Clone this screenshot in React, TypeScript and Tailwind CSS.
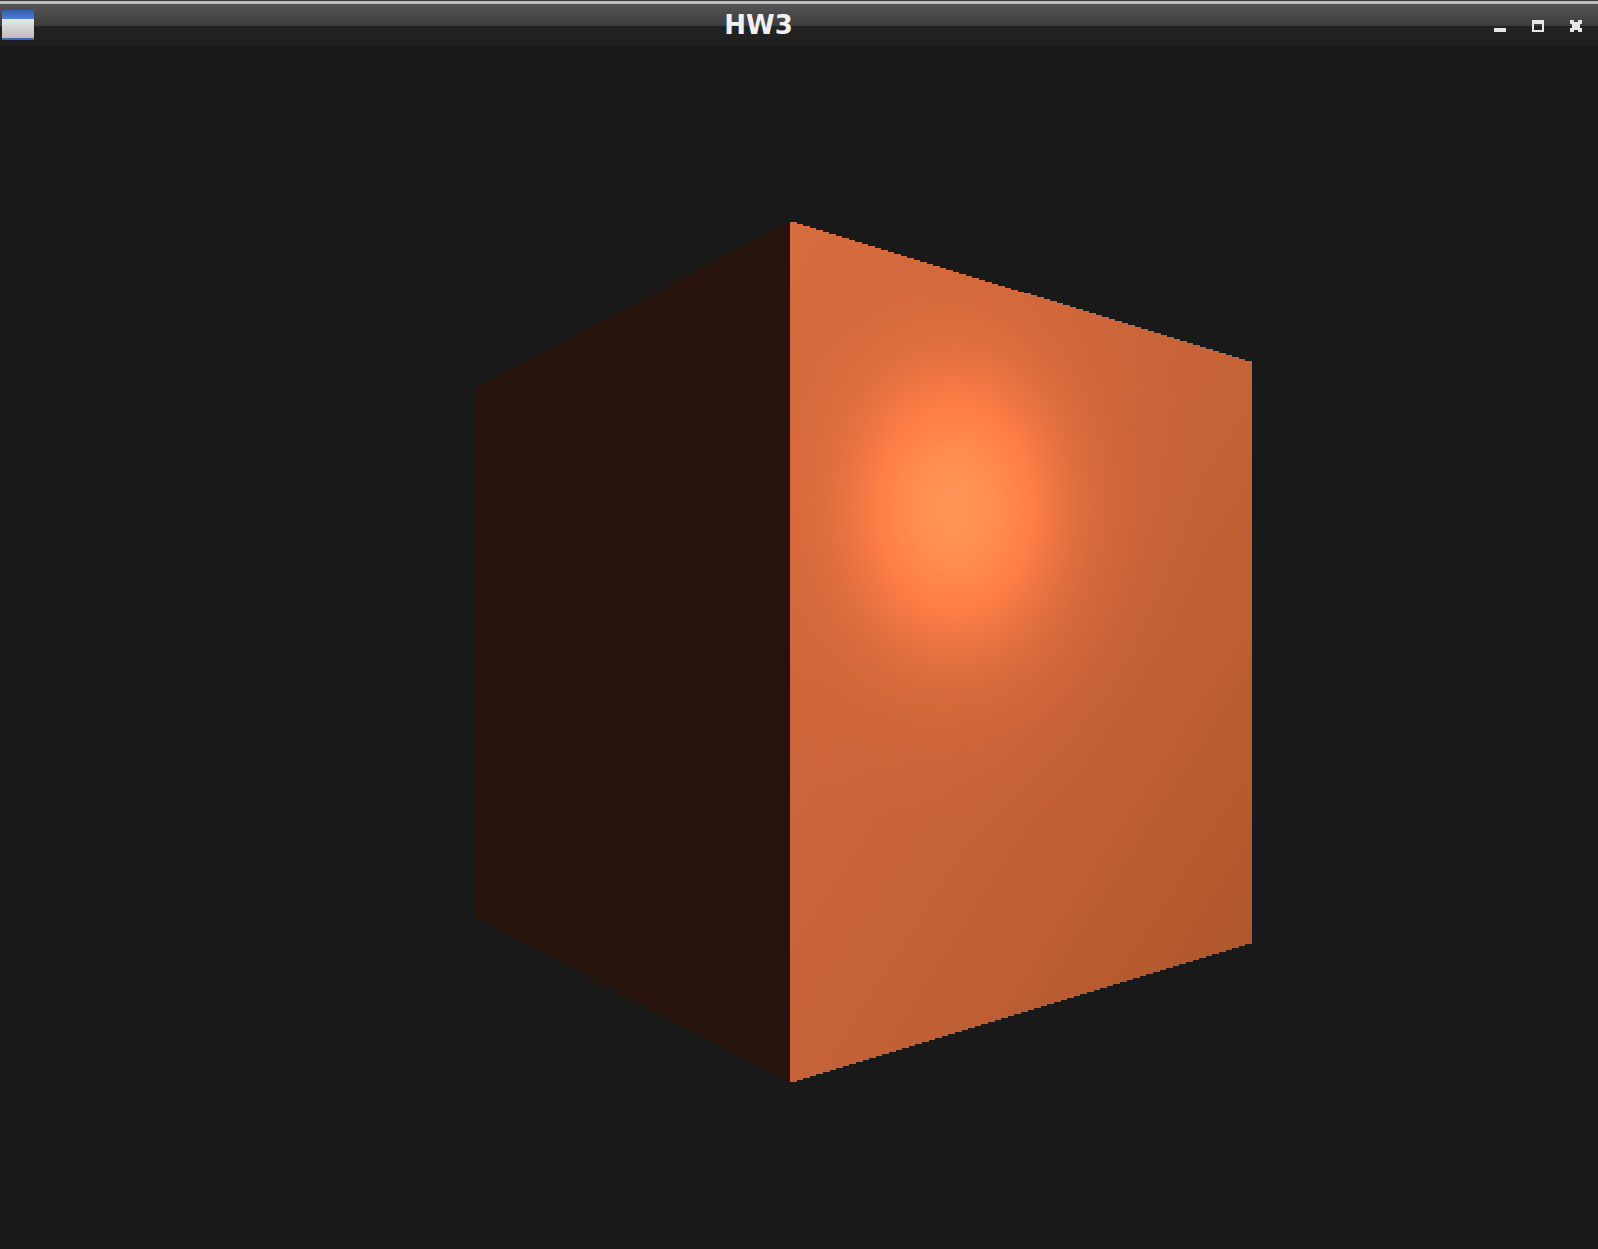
import React from 'react';

// walk an edge in 2px high steps, the way the rasterised cube looks
const stairs = (x1: number, y1: number, x2: number, y2: number) => {
  const rows = Math.round(Math.abs(y2 - y1) / 2);
  const pts: string[] = [];
  for (let i = 0; i < rows; i++) {
    const y = Math.round(y1 + ((y2 - y1) * i) / rows);
    pts.push(`${Math.round(x1 + ((x2 - x1) * i) / rows)},${y}`);
    pts.push(`${Math.round(x1 + ((x2 - x1) * (i + 1)) / rows)},${y}`);
  }
  return pts.join(' ');
};

const leftFace = [stairs(474, 388, 790, 220), stairs(790, 1082, 474, 916)].join(' ');
const rightFace = [stairs(790, 222, 1252, 363), stairs(1252, 944, 790, 1084)].join(' ');

const WindowIcon = () => (
  <div className="ml-[2px] mt-[10px] flex h-[30px] w-[32px] flex-col">
    <div className="h-[9px] bg-gradient-to-b from-[#2f5fb0] to-[#4c7fce]" />
    <div className="h-[19px] bg-gradient-to-b from-[#e8e8e8] to-[#bdbdbd]" />
    <div className="h-[2px] bg-[#3f68ad]" />
  </div>
);

const TitleBar = () => (
  <div className="relative h-[46px] shrink-0 overflow-hidden bg-[#1f1f1f]">
    {/* Bevel */}
    <div className="h-[1px] bg-[#3a3a3a]" />
    <div className="h-[3px] bg-[#bdbdbd]" />
    <div className="h-[22px] bg-gradient-to-b from-[#545454] to-[#3d3d3d]" />
    <div className="h-[20px] bg-gradient-to-b from-[#222222] to-[#1f1f1f]" />

    <div className="absolute inset-0 flex items-start justify-between">
      <WindowIcon />
      <div className="mt-[9px] mr-[11px] font-['DejaVu_Sans',sans-serif] text-[26px] leading-[32px] font-bold text-[#f0f0f0]">
        HW3
      </div>
      <div className="flex items-start">
        {/* Minimize */}
        <div className="mt-[28px] h-[4px] w-[12px] bg-[#e6e6e6]" />
        {/* Maximize */}
        <div className="mt-[20px] ml-[26px] h-[12px] w-[12px] border-2 border-t-[4px] border-[#e6e6e6]" />
        {/* Close */}
        <svg className="mt-[20px] ml-[26px] mr-[16px]" width="12" height="12" viewBox="0 0 12 12" shapeRendering="crispEdges">
          <path fill="#e6e6e6" d="M0 0h4v2h4V0h4v4h-2v4h2v4H8v-2H4v2H0V8h2V4H0z" />
        </svg>
      </div>
    </div>
  </div>
);

const Cube = () => (
  <svg className="block h-full w-full" viewBox="0 46 1598 1203" shapeRendering="crispEdges">
    <defs>
      <linearGradient id="face" gradientUnits="userSpaceOnUse" x1="790" y1="222" x2="1446" y2="643">
        <stop offset="0" stopColor="#d76c3e" />
        <stop offset="0.6" stopColor="#c66237" />
        <stop offset="1" stopColor="#b0572d" />
      </linearGradient>
      <radialGradient
        id="spot"
        gradientUnits="userSpaceOnUse"
        cx="0"
        cy="0"
        r="1"
        gradientTransform="translate(955 508) scale(250 330)"
      >
        <stop offset="0" stopColor="#ff9558" stopOpacity="1" />
        <stop offset="0.15" stopColor="#ff8e53" stopOpacity="1" />
        <stop offset="0.31" stopColor="#ff7e46" stopOpacity="1" />
        <stop offset="0.42" stopColor="#f27844" stopOpacity="0.8" />
        <stop offset="0.55" stopColor="#e4703f" stopOpacity="0.55" />
        <stop offset="0.75" stopColor="#d96b3c" stopOpacity="0.2" />
        <stop offset="1" stopColor="#d06639" stopOpacity="0" />
      </radialGradient>
    </defs>
    <polygon points={leftFace} fill="#26130c" />
    <polygon points={rightFace} fill="url(#face)" />
    <polygon points={rightFace} fill="url(#spot)" />
  </svg>
);

const App = () => {
  return (
    <div className="flex h-[1249px] w-full flex-col overflow-hidden bg-[#191919]">
      <TitleBar />
      <div className="min-h-0 flex-1">
        <Cube />
      </div>
    </div>
  );
};

export default App;
